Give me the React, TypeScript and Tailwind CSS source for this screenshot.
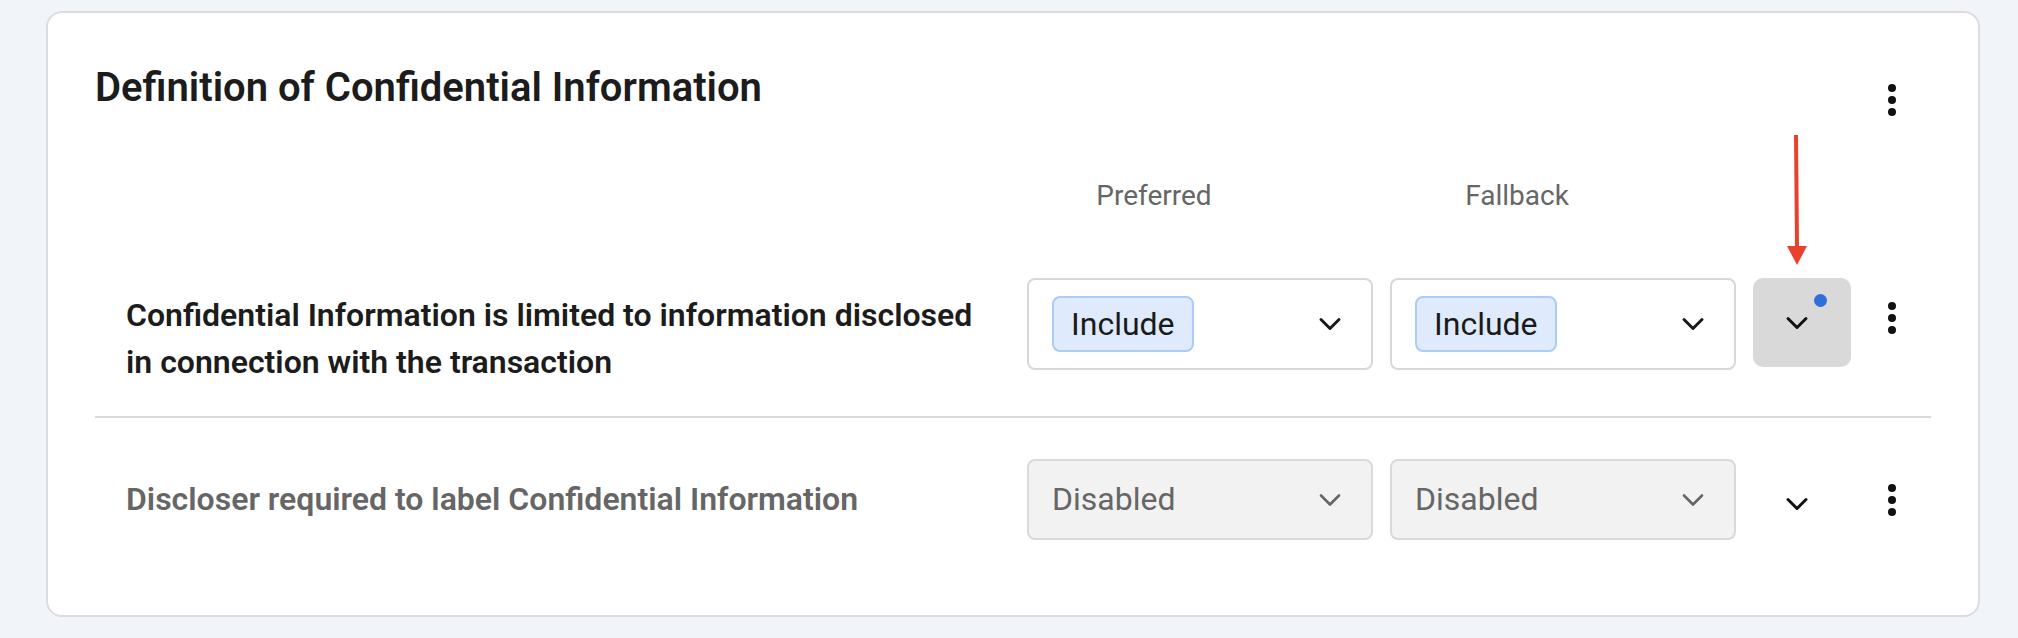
import React from 'react';
import { ChevronDown } from 'lucide-react';

const FONT = { fontFamily: 'Roboto, "Noto Sans", sans-serif' };

function Kebab() {
  return (
    <svg width="48" height="48" viewBox="0 0 48 48" className="shrink-0 text-[#111]">
      <circle cx="24" cy="12" r="4" fill="currentColor" />
      <circle cx="24" cy="24" r="4" fill="currentColor" />
      <circle cx="24" cy="36" r="4" fill="currentColor" />
    </svg>
  );
}

function IncludeSelect() {
  return (
    <div className="w-[346px] shrink-0 flex items-center justify-between rounded-[8px] border-2 border-[#d8d8d8] bg-white py-4 pl-[23px] pr-[23px]">
      <span className="rounded-[8px] border-2 border-[#aacdf6] bg-[#dfebfd] px-[17px] text-[32px] leading-[52px] text-[#1a1a1a]">
        Include
      </span>
      <ChevronDown size={36} strokeWidth={2} className="text-[#1a1a1a]" />
    </div>
  );
}

function DisabledSelect() {
  return (
    <div className="w-[346px] shrink-0 flex items-center justify-between rounded-[8px] border-2 border-[#d9d9d9] bg-[#f2f2f2] py-4 pl-[23px] pr-[23px]">
      <span className="text-[32px] leading-[45px] text-[#666]">Disabled</span>
      <ChevronDown size={36} strokeWidth={1.75} className="text-[#666]" />
    </div>
  );
}

export default function App() {
  return (
    <div className="min-h-screen bg-[#f1f4f9] pl-[46px] pr-[38px] pt-[11px]" style={FONT}>
      <div className="relative rounded-[16px] border-2 border-[#dcdde0] bg-white px-[47px] pt-[51px] pb-[75px]">
        {/* header */}
        <div className="flex items-start justify-between">
          <h2 className="text-[40px] leading-[48px] font-semibold text-[#1c1c1c]">
            Definition of Confidential Information
          </h2>
          <div className="mt-[12px] mr-[15px]">
            <Kebab />
          </div>
        </div>

        {/* column headers */}
        <div className="mt-[52px] flex gap-[17px] pl-[31px] pr-[15px]">
          <div className="flex-1" />
          <div className="w-[346px] shrink-0 pr-[92px] text-center text-[28px] leading-[40px] text-[#666]">Preferred</div>
          <div className="w-[346px] shrink-0 pr-[92px] text-center text-[28px] leading-[40px] text-[#666]">Fallback</div>
          <div className="w-[98px] shrink-0" />
          <div className="w-[48px] shrink-0" />
        </div>

        {/* row 1 */}
        <div className="mt-[62px] flex items-start gap-[17px] pb-[30px] pl-[31px] pr-[15px]">
          <div className="flex-1">
            <p className="mt-[14px] max-w-[860px] text-[32px] leading-[47px] font-semibold text-[#1c1c1c]">
              Confidential Information is limited to information disclosed in connection with the transaction
            </p>
          </div>
          <IncludeSelect />
          <IncludeSelect />
          <button className="relative flex h-[89px] w-[98px] shrink-0 items-center justify-center rounded-[10px] bg-[#d9d9d9] pr-[10px]">
            <ChevronDown size={36} strokeWidth={2} className="text-[#111]" />
            <span className="absolute left-[61px] top-[16px] h-[13px] w-[13px] rounded-full bg-[#2f6fdb]" />
          </button>
          <div className="mt-[16px]">
            <Kebab />
          </div>
        </div>

        <div className="h-[2px] bg-[#dadada]" />

        {/* row 2 */}
        <div className="flex items-center gap-[17px] pt-[41px] pl-[31px] pr-[15px]">
          <div className="flex-1">
            <p className="text-[32px] leading-[47px] font-semibold text-[#666]">
              Discloser required to label Confidential Information
            </p>
          </div>
          <DisabledSelect />
          <DisabledSelect />
          <div className="flex h-[81px] w-[98px] shrink-0 items-center justify-center pr-[10px] pt-[8px]">
            <ChevronDown size={36} strokeWidth={2} className="text-[#111]" />
          </div>
          <Kebab />
        </div>

        {/* annotation arrow */}
        <svg width="34" height="140" viewBox="0 0 34 140" className="absolute left-[1732px] top-[117px]">
          <line x1="16" y1="5" x2="17" y2="118" stroke="#e8412c" strokeWidth="4" />
          <polygon points="7,116 27,116 17,135" fill="#e8412c" />
        </svg>
      </div>
    </div>
  );
}
